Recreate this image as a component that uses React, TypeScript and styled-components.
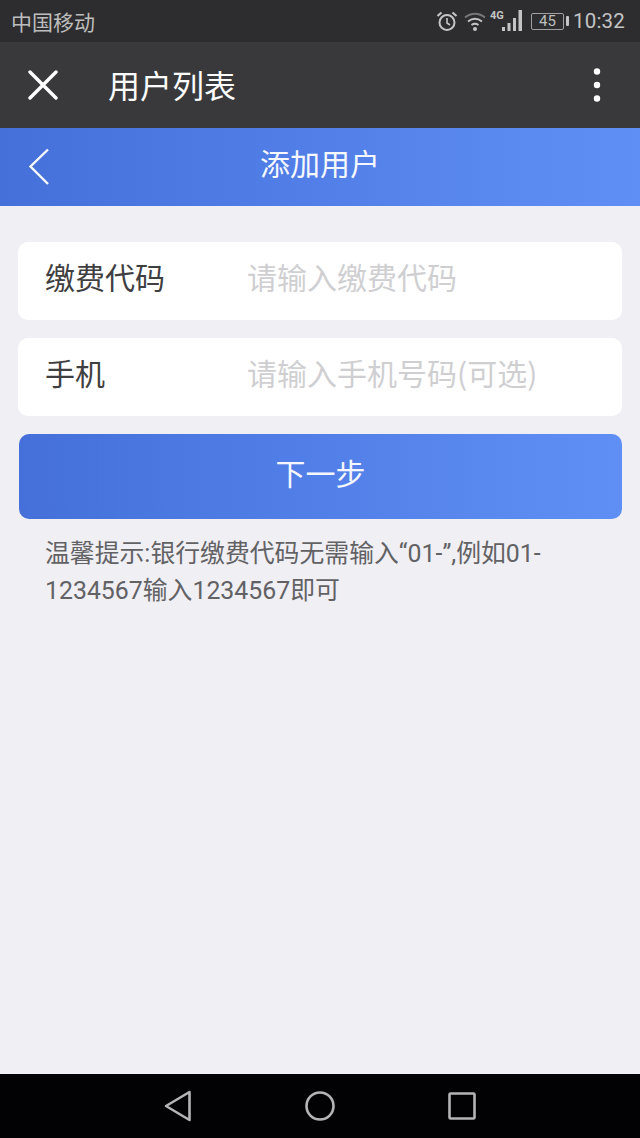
import React from "react";
import styled, { createGlobalStyle } from "styled-components";

const Global = createGlobalStyle`
  html, body { margin: 0; padding: 0; background: #f0eff4; }
  body { font-family: "Roboto", "Noto Sans CJK SC", sans-serif; }
  * { box-sizing: border-box; }
`;

const Screen = styled.div`
  width: 640px;
  height: 1138px;
  display: flex;
  flex-direction: column;
  overflow: hidden;
  background: #f0eff4;
`;

const StatusBar = styled.div`
  height: 42px;
  flex: none;
  background: #2d2d2f;
  color: #bdbdbd;
  display: flex;
  align-items: center;
  justify-content: space-between;
  padding: 0 15px 0 11px;
`;

const Carrier = styled.span`
  font-size: 21px;
  line-height: 42px;
  font-family: "Noto Sans CJK SC", sans-serif;
`;

const StatusRight = styled.div`
  display: flex;
  align-items: center;
`;

const Clock = styled.span`
  font-size: 20.5px;
  margin-left: 9px;
  letter-spacing: 0.2px;
  color: #c4c4c4;
`;

const Battery = styled.div`
  width: 33px;
  height: 17px;
  margin-left: 9px;
  border: 1.5px solid #a0a0a0;
  border-radius: 2px;
  color: #bdbdbd;
  font-size: 15px;
  line-height: 14px;
  text-align: center;
  position: relative;
  &::after {
    content: "";
    position: absolute;
    right: -6px;
    top: 2px;
    width: 3px;
    height: 10px;
    background: #c4c4c4;
    border-radius: 1px;
  }
`;

const NavBar = styled.div`
  height: 86px;
  flex: none;
  background: #39393b;
  display: flex;
  align-items: center;
  padding: 0 37px 0 28px;
`;

const NavTitle = styled.span`
  font-size: 32px;
  font-family: "Noto Sans CJK SC", sans-serif;
  color: #fbfbfb;
  margin-left: 50px;
  flex: 1;
  line-height: 84px;
  height: 86px;
`;

const BlueHeader = styled.div`
  height: 78px;
  flex: none;
  background: linear-gradient(90deg, #4570da 0%, #5f8ff5 100%);
  display: flex;
  align-items: center;
  justify-content: center;
  padding-bottom: 11px;
  position: relative;
`;

const BackIcon = styled.svg`
  position: absolute;
  left: 28px;
  top: 20px;
`;

const HeaderTitle = styled.span`
  font-size: 30px;
  line-height: 40px;
  font-family: "Noto Sans CJK SC", sans-serif;
  color: #f6f8fe;
`;

const Content = styled.div`
  flex: 1;
  padding: 36px 18px 0;
  display: flex;
  flex-direction: column;
`;

const Field = styled.label`
  height: 78px;
  margin-bottom: 18px;
  background: #fff;
  border-radius: 10px;
  display: flex;
  align-items: center;
  padding: 0 0 10px 27px;
  font-family: "Noto Sans CJK SC", sans-serif;
`;

const FieldLabel = styled.span`
  width: 202px;
  flex: none;
  font-size: 30px;
  line-height: 44px;
  color: #3f3f42;
`;

const FieldInput = styled.input`
  flex: 1;
  min-width: 0;
  border: 0;
  outline: 0;
  background: transparent;
  padding: 0;
  font-size: 30px;
  line-height: 44px;
  font-family: "Noto Sans CJK SC", sans-serif;
  &::placeholder {
    color: #cfcfd2;
    opacity: 1;
  }
`;

const NextButton = styled.button`
  height: 85px;
  margin: 0 0 0 1px;
  width: 603px;
  border: 0;
  border-radius: 10px;
  background: linear-gradient(90deg, #4570da 0%, #5f8ff5 100%);
  color: #f4f7fe;
  font-size: 30px;
  font-family: "Noto Sans CJK SC", sans-serif;
  padding: 0 0 10px;
`;

const Tip = styled.p`
  margin: 16px 0 0 27px;
  width: 510px;
  font-size: 24.85px;
  line-height: 37px;
  color: #626265;
  font-family: "Roboto", "Noto Sans CJK SC", sans-serif;
`;

const BottomBar = styled.div`
  height: 64px;
  flex: none;
  background: #020204;
  display: flex;
  align-items: center;
  justify-content: center;
  gap: 113px;
  padding-right: 1px;
`;

const Dots = () => (
  <svg width="12" height="36" viewBox="0 0 12 36">
    <circle cx="6" cy="4.5" r="3.200" fill="#fff" />
    <circle cx="6" cy="18" r="3.200" fill="#fff" />
    <circle cx="6" cy="31.5" r="3.200" fill="#fff" />
  </svg>
);

export default function App() {
  return (
    <Screen>
      <Global />
      <StatusBar>
        <Carrier>中国移动</Carrier>
        <StatusRight>
          <svg width="22" height="22" viewBox="0 0 22 22" fill="none" stroke="#c4c4c4">
            <circle cx="11" cy="12.500" r="7.500" strokeWidth="2" />
            <path d="M11 8v5l3 2" strokeWidth="1.600" />
            <path d="M1.500 6 5.500 2.500M20.500 6l-4-3.500" strokeWidth="2.200" />
          </svg>
          <svg width="24" height="22" viewBox="0 0 24 22" fill="none" stroke="#c4c4c4" style={{ marginLeft: 5 }}>
            <path d="M2 7.500C8 2.500 16 2.500 22 7.500" strokeWidth="2" stroke="#77777a" />
            <path d="M5 11.500c4.500-3.500 9.500-3.500 14 0" strokeWidth="2" />
            <path d="M8.500 15c2.300-1.600 4.700-1.600 7 0" strokeWidth="2" />
            <circle cx="12" cy="19" r="2" fill="#c4c4c4" stroke="none" />
          </svg>
          <svg width="32" height="24" viewBox="0 0 32 24" fill="#c4c4c4" style={{ marginLeft: 3 }}>
            <text x="0" y="10" fontSize="11" fontWeight="700" fontFamily="Roboto, sans-serif">4G</text>
            <rect x="12" y="18" width="3" height="4" />
            <rect x="17.500" y="14" width="3" height="8" />
            <rect x="23" y="9" width="3" height="13" />
            <rect x="28.500" y="1" width="3.500" height="21" />
          </svg>
          <Battery>45</Battery>
          <Clock>10:32</Clock>
        </StatusRight>
      </StatusBar>
      <NavBar>
        <svg width="30" height="30" viewBox="0 0 30 30" stroke="#fff" strokeWidth="3.400" strokeLinecap="round">
          <path d="M2 2 28 28M28 2 2 28" />
        </svg>
        <NavTitle>用户列表</NavTitle>
        <Dots />
      </NavBar>
      <BlueHeader>
        <BackIcon width="22" height="38" viewBox="0 0 22 38" fill="none" stroke="#f6f8fe" strokeWidth="2.400">
          <path d="M20 1.500 2.500 18.500 20 36" />
        </BackIcon>
        <HeaderTitle>添加用户</HeaderTitle>
      </BlueHeader>
      <Content>
        <Field>
          <FieldLabel>缴费代码</FieldLabel>
          <FieldInput placeholder="请输入缴费代码" />
        </Field>
        <Field>
          <FieldLabel>手机</FieldLabel>
          <FieldInput placeholder="请输入手机号码(可选)" />
        </Field>
        <NextButton>下一步</NextButton>
        <Tip>温馨提示:银行缴费代码无需输入“01-”,例如01-1234567输入1234567即可</Tip>
      </Content>
      <BottomBar>
        <svg width="28" height="32" viewBox="0 0 28 32" fill="none" stroke="#b4b4b6" strokeWidth="2.600" strokeLinejoin="round">
          <path d="M25.500 2 2 16 25.500 30Z" />
        </svg>
        <svg width="30" height="30" viewBox="0 0 30 30" fill="none" stroke="#b4b4b6" strokeWidth="2.600">
          <circle cx="15" cy="15" r="13.500" />
        </svg>
        <svg width="28" height="28" viewBox="0 0 28 28" fill="none" stroke="#b4b4b6" strokeWidth="2.600" strokeLinejoin="round">
          <rect x="1.500" y="1.500" width="25" height="25" rx="1" />
        </svg>
      </BottomBar>
    </Screen>
  );
}
